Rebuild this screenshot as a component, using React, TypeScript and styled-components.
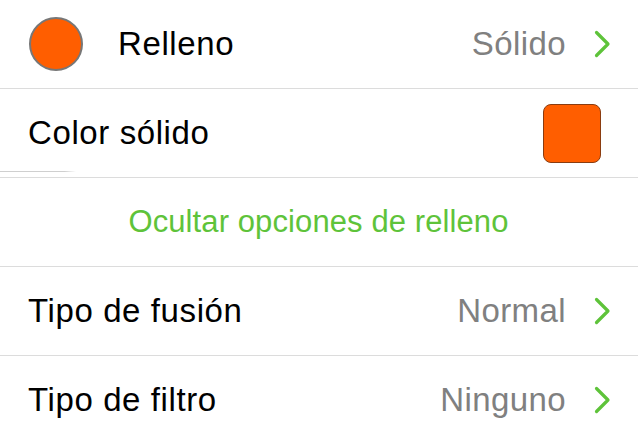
import React from "react";
import styled, { createGlobalStyle } from "styled-components";

const Global = createGlobalStyle`
  html, body { margin: 0; padding: 0; background: #ffffff; }
  body { font-family: "Liberation Sans", Arial, sans-serif; -webkit-font-smoothing: antialiased; }
`;

const List = styled.div`
  width: 638px;
  height: 439px;
  overflow: hidden;
  display: flex;
  flex-direction: column;
  background: #ffffff;
`;

const Row = styled.div<{ $center?: boolean }>`
  position: relative;
  flex: 0 0 88px;
  display: flex;
  align-items: center;
  justify-content: ${(p) => (p.$center ? "center" : "flex-start")};
  padding: 0 27px 0 28px;
  border-bottom: 1px solid #dcdcdc;
  box-sizing: content-box;
`;

const Swatch = styled.div`
  width: 50px;
  height: 50px;
  border-radius: 50%;
  background: #ff5e00;
  border: 2px solid #777777;
  margin-left: 1px;
  margin-right: 35px;
  flex: 0 0 auto;
`;

const Label = styled.span`
  font-size: 33px;
  letter-spacing: 0.6px;
  color: #000000;
  flex: 1 1 auto;
  white-space: nowrap;
`;

const Value = styled.span`
  font-size: 33px;
  letter-spacing: 0.4px;
  color: #808080;
  white-space: nowrap;
  margin-right: 28px;
`;

const Action = styled.span`
  font-size: 31px;
  color: #5ec33a;
  white-space: nowrap;
  letter-spacing: 0.1px;
  margin-left: -2px;
`;

const ColorBox = styled.div`
  width: 56px;
  height: 57px;
  border-radius: 8px;
  background: #ff5e00;
  border: 1px solid #8a3c10;
  margin-right: 10px;
  flex: 0 0 auto;
`;

const Glitch = styled.div`
  position: absolute;
  left: 0;
  bottom: 5px;
  width: 76px;
  height: 1px;
  background: linear-gradient(to right, #cfcfcf 85%, rgba(220, 220, 220, 0));
`;

const Chevron = () => (
  <svg width="17" height="28" viewBox="0 0 17 28" style={{ flex: "0 0 auto" }}>
    <path d="M2.5 2.5 L14 14 L2.5 25.5" fill="none" stroke="#5ec33a" strokeWidth="3.2" strokeLinecap="round" strokeLinejoin="round" />
  </svg>
);

export default function App() {
  return (
    <>
      <Global />
      <List>
        <Row>
          <Swatch />
          <Label>Relleno</Label>
          <Value>Sólido</Value>
          <Chevron />
        </Row>
        <Row>
          <Label>Color sólido</Label>
          <ColorBox />
          <Glitch />
        </Row>
        <Row $center>
          <Action>Ocultar opciones de relleno</Action>
        </Row>
        <Row>
          <Label>Tipo de fusión</Label>
          <Value>Normal</Value>
          <Chevron />
        </Row>
        <Row>
          <Label>Tipo de filtro</Label>
          <Value>Ninguno</Value>
          <Chevron />
        </Row>
      </List>
    </>
  );
}
